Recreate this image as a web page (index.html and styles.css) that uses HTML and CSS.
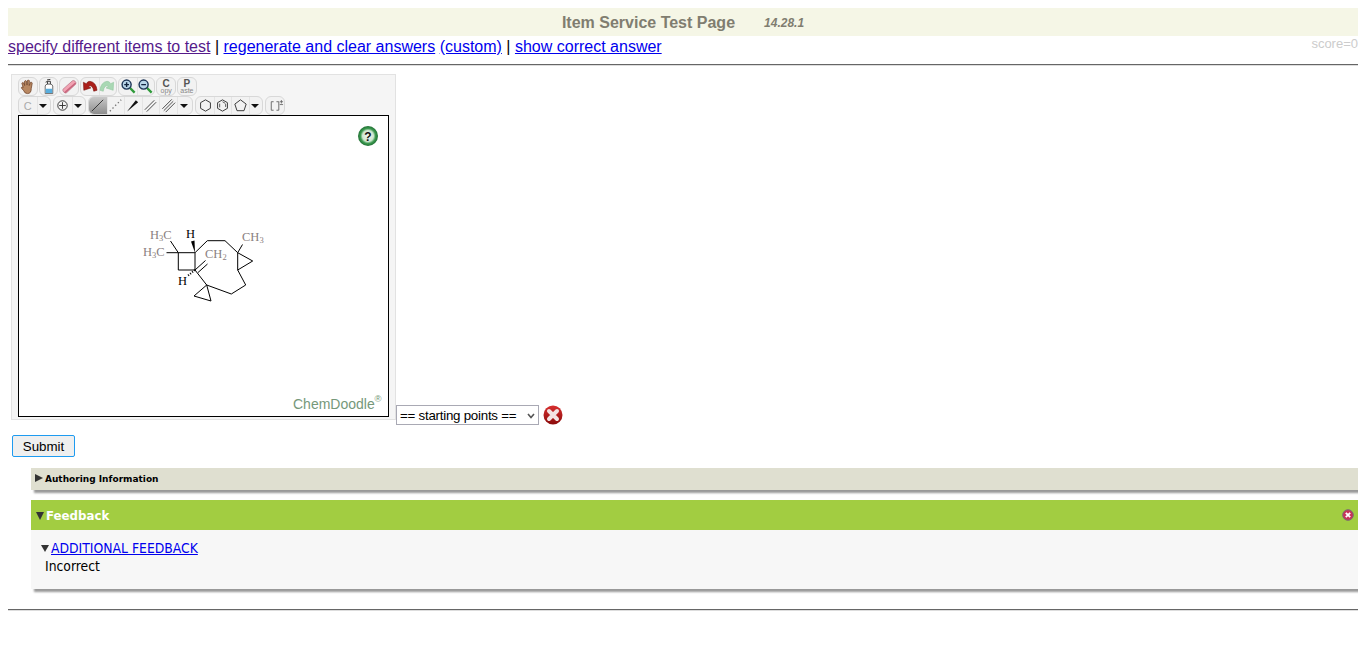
FILE: index.html
```html
<!DOCTYPE html>
<html lang="en">
<head>
<meta charset="utf-8">
<title>Item Service Test Page</title>
<link rel="stylesheet" href="styles.css">
</head>
<body>
<header class="title-bar">
  <span class="title">Item Service Test Page</span>
  <span class="version">14.28.1</span>
</header>
<nav class="links">
  <div>
    <a href="#" class="visited">specify different items to test</a> |
    <a href="#">regenerate and clear answers</a>
    <a href="#">(custom)</a> |
    <a href="#">show correct answer</a>
  </div>
  <span class="score">score=0</span>
</nav>
<hr class="rule rule-top">
<section class="question">
  <div class="sketcher">
    <div class="tb-row">
      <div class="group">
        <span class="btn"><svg viewBox="0 0 18 18"><path d="M4.500 10L3 5.500Q4 4 5.200 5.500L6 8L5.800 3.500Q7 2 8 3.500L8.500 7.500L9 2.500Q10.300 1.500 11 3L10.800 8L12.300 4.500Q13.500 4 14 5.500L13 11Q13 16.500 9 16.500Q6 16.500 5 13.500L2.500 10.500Q3 8.500 4.500 10z" fill="#b88862" stroke="#70442a" stroke-width=".8"/></svg></span>
      </div>
      <div class="group">
        <span class="btn"><svg viewBox="0 0 18 18"><path d="M5.500 8.500Q6 6.500 8 6.500H11Q13 6.500 13.500 8.500V16.500H5.500z" fill="#fff" stroke="#555" stroke-width=".9"/><path d="M6 11.500h7V16H6z" fill="#58aede"/><path d="M8 6.500V3.500H11V6.500M8 3.500L6 4.500M7.500 2L11 1.500" fill="none" stroke="#333" stroke-width="1"/></svg></span>
      </div>
      <div class="group">
        <span class="btn"><svg viewBox="0 0 18 18"><path d="M2 12L12 3Q13.500 2 15 3.500Q16.500 5 15.500 6.500L6 15.500Q4.500 16.500 3 15Q1.500 13.500 2 12z" fill="#f2a3b3" stroke="#b07484" stroke-width=".7"/><path d="M4 15.500L15.500 5.500" stroke="#c9667e" stroke-width="1.600"/></svg></span>
      </div>
      <div class="group">
        <span class="btn"><svg viewBox="0 0 18 18"><path d="M17 13Q16 4.500 9.500 3.500Q7 3.500 5.500 6L2.500 4.500L3 13L10.500 10.500L8 9Q9.500 7.500 11.500 9Q13 10.500 13.500 14z" fill="#ab1f1a" stroke="#781510" stroke-width=".6"/></svg></span>
        <span class="btn"><svg viewBox="0 0 18 18"><path d="M1 13Q2 4.500 8.500 3.500Q11 3.500 12.500 6L15.500 4.500L15 13L7.500 10.500L10 9Q8.500 7.500 6.500 9Q5 10.500 4.500 14z" fill="#a9d8b4" stroke="#93c6a0" stroke-width=".6"/></svg></span>
      </div>
      <div class="group">
        <span class="btn"><svg viewBox="0 0 18 18"><path d="M10.500 10.500L15.500 15.500" stroke="#2f9a3a" stroke-width="2.400"/><circle cx="7" cy="7" r="4.800" fill="#b9d6ea" stroke="#1d3557" stroke-width="1.500"/><path d="M4.500 7h5M7 4.500v5" stroke="#10233f" stroke-width="1.500"/></svg></span>
        <span class="btn"><svg viewBox="0 0 18 18"><path d="M10.500 10.500L15.500 15.500" stroke="#2f9a3a" stroke-width="2.400"/><circle cx="7" cy="7" r="4.800" fill="#b9d6ea" stroke="#1d3557" stroke-width="1.500"/><path d="M4.500 7h5" stroke="#10233f" stroke-width="1.500"/></svg></span>
      </div>
      <div class="group">
        <span class="btn btn-label"><b>C</b><small>opy</small></span>
      </div>
      <div class="group">
        <span class="btn btn-label"><b>P</b><small>aste</small></span>
      </div>
    </div>
    <div class="tb-row tb-row-tools">
      <div class="group">
        <span class="btn btn-c">C</span>
        <span class="btn btn-drop"></span>
      </div>
      <div class="group">
        <span class="btn"><svg viewBox="0 0 18 18"><circle cx="9" cy="9" r="5" fill="none" stroke="#333"/><path d="M5.500 9h7M9 5.500v7" stroke="#333"/></svg></span>
        <span class="btn btn-drop"></span>
      </div>
      <div class="group group-line">
        <span class="btn btn-active"><svg viewBox="0 0 18 18"><path d="M3 15L15 3" stroke="#333"/></svg></span>
        <span class="btn"><svg viewBox="0 0 18 18"><path d="M3 15L15 3" stroke="#777" stroke-width="1.400" stroke-dasharray="1.500 2.500"/></svg></span>
        <span class="btn"><svg viewBox="0 0 18 18"><path d="M3 15.500L12.500 3.500L15 5.500z" fill="#111"/></svg></span>
        <span class="btn"><svg viewBox="0 0 18 18"><path d="M3 13.500L13 3.500M5 15.500L15 5.500" stroke="#444"/></svg></span>
        <span class="btn"><svg viewBox="0 0 18 18"><path d="M2.500 12.500L12.500 2.500M4 14.500L14 4.500M6 16L16 6" stroke="#444"/></svg></span>
        <span class="btn btn-drop"></span>
      </div>
      <div class="group">
        <span class="btn"><svg viewBox="0 0 18 18"><path d="M9 3l5.200 3v6L9 15l-5.200-3V6z" fill="none" stroke="#333"/></svg></span>
        <span class="btn"><svg viewBox="0 0 18 18"><path d="M9 3l5.200 3v6L9 15l-5.200-3V6z" fill="none" stroke="#333"/><path d="M9 5l3 1.800M12.300 7.500v3M6 7v4" fill="none" stroke="#555"/></svg></span>
        <span class="btn"><svg viewBox="0 0 18 18"><path d="M9 3l6 4.500-2.300 7H5.300L3 7.500z" fill="none" stroke="#333"/></svg></span>
        <span class="btn btn-drop"></span>
      </div>
      <div class="group">
        <span class="btn"><svg viewBox="0 0 18 18"><path d="M7 5H4.500V14H7M10 5H12.500V14H10" fill="none" stroke="#666"/><path d="M13.500 5h3.500M15.250 3.200v3.600M13.500 8h3.500" stroke="#555" stroke-width=".8"/></svg></span>
      </div>
    </div>
    <svg class="canvas" viewBox="0 0 369 300" role="img" aria-label="molecule sketch">
      <defs>
        <radialGradient id="helpFill" cx="50%" cy="50%" r="50%">
          <stop offset="0" stop-color="#f2f8f2"/>
          <stop offset=".55" stop-color="#cfe6d0"/>
          <stop offset=".75" stop-color="#3d9a50"/>
          <stop offset="1" stop-color="#1f6f33"/>
        </radialGradient>
      </defs>
      <g transform="translate(-19 -116)">
        <g fill="none" stroke="#000" stroke-width="1">
          <path d="M178.300 252.700H195V270H178.300z"/>
          <path d="M195 252.700L207.300 240.700H225L237.700 252.700L252.700 261L237.700 270V252.700"/>
          <path d="M237.700 252.700L242.500 244.500"/>
          <path d="M237.700 270L245.700 285L231.300 294L206.700 285L195 270"/>
          <path d="M206.700 285L194 296L211 301z"/>
          <path d="M178.300 252.700L170.500 241M178.300 252.700H166.500"/>
          <path d="M195 270L205.500 260.500M198 272.500L207.500 264"/>
        </g>
        <path d="M195 252.700L191 241.500L194.500 240.500z" fill="#000"/>
        <path d="M195 270L187.500 276" stroke="#000" stroke-width="2" stroke-dasharray="1 1.600" fill="none"/>
        <g class="mol-gray">
          <text x="150" y="239">H<tspan class="sub" dy="2">3</tspan><tspan dy="-2">C</tspan></text>
          <text x="143" y="256">H<tspan class="sub" dy="2">3</tspan><tspan dy="-2">C</tspan></text>
          <text x="205" y="258">CH<tspan class="sub" dy="2">2</tspan></text>
          <text x="242" y="241">CH<tspan class="sub" dy="2">3</tspan></text>
        </g>
        <g class="mol-black">
          <text x="186" y="238">H</text>
          <text x="178" y="285">H</text>
        </g>
        <text class="brand" x="293" y="409">ChemDoodle</text>
        <text class="brand-mark" x="374.500" y="402">®</text>
        <circle cx="368" cy="136" r="10" fill="url(#helpFill)"/>
        <text class="help" x="368" y="140.500">?</text>
      </g>
    </svg>
  </div>
  <select class="starting">
    <option>== starting points ==</option>
  </select>
  <svg class="clear" viewBox="0 0 20 20" role="img" aria-label="clear">
    <defs>
      <linearGradient id="clearFill" x1="0" y1="0" x2="0" y2="1">
        <stop offset="0" stop-color="#d83030"/>
        <stop offset="1" stop-color="#8a0a0a"/>
      </linearGradient>
    </defs>
    <circle cx="10" cy="10" r="9.500" fill="url(#clearFill)"/>
    <path d="M6 6L14 14M14 6L6 14" stroke="#f3e4e4" stroke-width="4" stroke-linecap="round"/>
  </svg>
</section>
<button class="submit" type="button">Submit</button>
<section class="panel panel-authoring">
  <span class="arrow-right"></span><span>Authoring Information</span>
</section>
<section class="panel panel-feedback">
  <div class="feedback-head">
    <div class="feedback-title"><span class="arrow-down"></span><span>Feedback</span></div>
    <svg class="feedback-close" viewBox="0 0 12 12" role="img" aria-label="close">
      <circle cx="6" cy="6" r="5.300" fill="#c8325a" stroke="#7a6a70"/>
      <path d="M3.800 3.800L8.200 8.200M8.200 3.800L3.800 8.200" stroke="#fff" stroke-width="1.800"/>
    </svg>
  </div>
  <div class="feedback-body">
    <div class="additional"><span class="arrow-down arrow-small"></span><a href="#">ADDITIONAL FEEDBACK</a></div>
    <div class="incorrect">Incorrect</div>
  </div>
</section>
<hr class="rule rule-bottom">
</body>
</html>
```
FILE: styles.css
```css
html, body {
  background: #fff;
}
body {
  margin: 8px;
  font-family: "Liberation Sans", Arial, sans-serif;
  font-size: 16px;
  color: #000;
}
.title-bar {
  box-sizing: border-box;
  height: 28px;
  padding-top: 2px;
  background: #f5f6e6;
  display: flex;
  justify-content: center;
  align-items: center;
  gap: 29px;
  color: #807d70;
  font-weight: bold;
}
.title {
  font-size: 16px;
}
.version {
  font-size: 12px;
  font-style: italic;
}
.links {
  display: flex;
  justify-content: space-between;
  height: 19px;
  padding-top: 2px;
  line-height: 18px;
}
.links a {
  color: #0000ee;
}
.links a.visited {
  color: #551a8b;
}
.score {
  margin-top: -1px;
  font-size: 13px;
  line-height: 14px;
  color: #cccccc;
}
.rule {
  margin: 0;
  height: 0;
  border: 0;
  border-top: 1px solid #666;
  border-bottom: 1px solid #ddd;
}
.rule-top {
  margin-top: 7px;
}
.rule-bottom {
  margin-top: 20px;
}
.question {
  display: flex;
  align-items: flex-end;
  margin-top: 8px;
}
.sketcher {
  box-sizing: border-box;
  width: 385px;
  height: 346px;
  margin: 0 0 5px 3px;
  padding: 2px 6px;
  background: #f5f5f5;
  border: 1px solid #e2e2e2;
}
.tb-row {
  display: flex;
  gap: 1.200px;
  height: 19px;
}
.tb-row-tools {
  gap: 2.500px;
}
.group {
  display: flex;
  height: 17px;
  background: #f2f2f2;
  border: 1px solid #d8d8d8;
  border-radius: 6px;
  overflow: hidden;
}
.btn {
  display: flex;
  align-items: center;
  justify-content: center;
  width: 17.500px;
  height: 17px;
  flex: none;
  overflow: hidden;
}
.group-line .btn {
  width: 17.600px;
}
.btn + .btn {
  box-shadow: inset 1px 0 0 #e4e4e4;
}
.btn svg {
  display: block;
  flex: none;
  width: 17px;
  height: 17px;
}
.btn-c {
  font-size: 11px;
  color: #aaa;
}
.btn-label {
  flex-direction: column;
  color: #555;
  line-height: 7px;
}
.btn-label b {
  font-size: 10px;
}
.btn-label small {
  font-size: 7px;
  color: #888;
}
.btn.btn-drop {
  width: 13px;
}
.group-line .btn.btn-drop {
  width: 15px;
}
.btn-drop::after {
  content: "";
  border-left: 4px solid transparent;
  border-right: 4px solid transparent;
  border-top: 4px solid #111;
}
.btn-active {
  background: linear-gradient(#c9c9c9, #8d8d8d);
}
.canvas {
  display: block;
  box-sizing: border-box;
  width: 371px;
  height: 302px;
  background: #fff;
  border: 1px solid #000;
}
.mol-gray text, .mol-black text {
  font-family: "Liberation Serif", "Times New Roman", serif;
  font-size: 12.500px;
}
.mol-gray text {
  fill: #8a8080;
}
.mol-black text {
  fill: #000;
}
.mol-gray .sub {
  font-size: 8.500px;
}
.brand {
  font-family: "Liberation Sans", Arial, sans-serif;
  font-size: 14px;
  fill: #76987a;
}
.brand-mark {
  font-family: "Liberation Sans", Arial, sans-serif;
  font-size: 9.500px;
  fill: #76987a;
}
.help {
  font-family: "Liberation Sans", Arial, sans-serif;
  font-size: 12px;
  font-weight: bold;
  text-anchor: middle;
  fill: #111;
}
.starting {
  box-sizing: border-box;
  width: 143px;
  height: 20px;
  padding: 0 0 0 3px;
  appearance: none;
  background: #fff url("data:image/svg+xml,%3Csvg xmlns='http://www.w3.org/2000/svg' width='8' height='6'%3E%3Cpath d='M1 1l3 3.500L7 1' fill='none' stroke='%23555' stroke-width='1.600'/%3E%3C/svg%3E") no-repeat 130px 7px;
  border: 1px solid #a9a9b4;
  font-family: "Liberation Sans", Arial, sans-serif;
  font-size: 13.333px;
  letter-spacing: -.25px;
  color: #000;
}
.clear {
  width: 20px;
  height: 20px;
  margin-left: 4px;
}
.submit {
  display: block;
  box-sizing: border-box;
  width: 63px;
  height: 22px;
  margin: 10px 0 0 4px;
  padding: 0;
  background: #efefef;
  border: 1px solid #1e9bf0;
  border-radius: 2px;
  font-family: "Liberation Sans", Arial, sans-serif;
  font-size: 13.333px;
  color: #000;
}
.panel {
  margin-left: 23px;
  box-shadow: 3px 3px 2px #999;
  font-family: "DejaVu Sans", Verdana, sans-serif;
}
.panel-authoring {
  display: flex;
  align-items: center;
  gap: 2px;
  box-sizing: border-box;
  height: 22px;
  margin-top: 11px;
  padding: 0 0 1px 4px;
  background: #dfdfd0;
  font-size: 9px;
  font-weight: bold;
}
.arrow-right {
  width: 0;
  height: 0;
  margin-top: -2px;
  border-top: 4px solid transparent;
  border-bottom: 4px solid transparent;
  border-left: 8px solid #333;
}
.panel-feedback {
  margin-top: 10px;
  background: #f7f7f7;
}
.feedback-head {
  display: flex;
  align-items: center;
  justify-content: space-between;
  box-sizing: border-box;
  height: 30px;
  padding: 1px 4px 0 5px;
  background: #a2cd41;
}
.feedback-title {
  display: flex;
  align-items: center;
  gap: 2px;
  color: #fff;
  font-size: 11.800px;
  font-weight: bold;
}
.arrow-down {
  width: 0;
  height: 0;
  border-left: 4px solid transparent;
  border-right: 4px solid transparent;
  border-top: 8px solid #333;
}
.arrow-small {
  border-top-width: 7px;
  margin-right: 2px;
}
.feedback-close {
  width: 12px;
  height: 12px;
  margin-top: -2px;
}
.feedback-body {
  height: 59px;
  box-sizing: border-box;
  padding: 9px 0 0 10px;
  font-family: "DejaVu Sans Condensed", "DejaVu Sans", sans-serif;
  font-size: 13.800px;
  line-height: 18px;
}
.additional {
  display: flex;
  align-items: center;
  height: 18px;
}
.additional a {
  color: #0000ee;
}
.incorrect {
  padding-left: 4px;
}
```
